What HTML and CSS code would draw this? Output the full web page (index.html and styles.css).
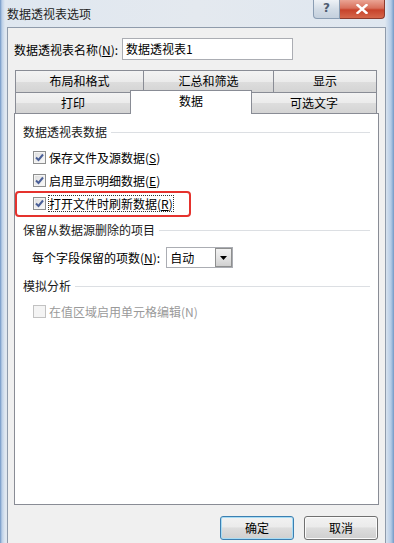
FILE: index.html
```html
<!DOCTYPE html>
<html lang="zh-CN">
<head>
    <meta charset="UTF-8">
    <title>数据透视表选项</title>
    <link rel="stylesheet" href="styles.css">
</head>
<body>
    <div class="frame">
        <div class="titlebar">
            <div class="title">数据透视表选项</div>
            <div class="caption-btns">
                <div class="btn-help">?</div>
                <div class="btn-close">
                    <svg width="12" height="10" viewBox="0 0 12 10">
                        <path d="M1.5 1 L10.5 9 M10.5 1 L1.5 9" stroke="#fff" stroke-width="2.4" stroke-linecap="square"/>
                    </svg>
                </div>
            </div>
        </div>

        <div class="client">
            <div class="name-row">
                <span class="label">数据透视表名称(<u>N</u>):</span>
                <div class="textbox">数据透视表1</div>
            </div>

            <div class="tabs">
                <div class="tab-row row1">
                    <div class="tab w128">布局和格式</div>
                    <div class="tab w130">汇总和筛选</div>
                    <div class="tab w104 last">显示</div>
                </div>
                <div class="tab-row row2">
                    <div class="tab w115">打印</div>
                    <div class="tab w122 active">数据</div>
                    <div class="tab w125 last">可选文字</div>
                </div>
            </div>

            <div class="panel">
                <div class="group">数据透视表数据</div>
                <div class="checks">
                    <div class="check-row">
                        <span class="cb"><svg width="11" height="11" viewBox="0 0 11 11"><path d="M2 5.5 L4.5 8 L9 2.5" fill="none" stroke="#4a5f97" stroke-width="2"/></svg></span>
                        <span>保存文件及源数据(<u>S</u>)</span>
                    </div>
                    <div class="check-row">
                        <span class="cb"><svg width="11" height="11" viewBox="0 0 11 11"><path d="M2 5.5 L4.5 8 L9 2.5" fill="none" stroke="#4a5f97" stroke-width="2"/></svg></span>
                        <span>启用显示明细数据(<u>E</u>)</span>
                    </div>
                    <div class="check-row">
                        <span class="cb"><svg width="11" height="11" viewBox="0 0 11 11"><path d="M2 5.5 L4.5 8 L9 2.5" fill="none" stroke="#4a5f97" stroke-width="2"/></svg></span>
                        <span class="focus">打开文件时刷新数据(<u>R</u>)</span>
                    </div>
                </div>

                <div class="group g2">保留从数据源删除的项目</div>
                <div class="select-row">
                    <span>每个字段保留的项数(<u>N</u>):</span>
                    <div class="combo">
                        <span class="combo-text">自动</span>
                        <span class="combo-btn">
                            <svg width="7" height="4" viewBox="0 0 7 4"><path d="M0 0 H7 L3.5 4 Z" fill="#000"/></svg>
                        </span>
                    </div>
                </div>

                <div class="group g3">模拟分析</div>
                <div class="check-row disabled">
                    <span class="cb"></span>
                    <span>在值区域启用单元格编辑(N)</span>
                </div>

                <div class="mark"></div>
            </div>

            <div class="buttons">
                <div class="button default">确定</div>
                <div class="button">取消</div>
            </div>
        </div>
    </div>
</body>
</html>
```

FILE: styles.css
```css
*{
    box-sizing: border-box;
}
body{
    margin: 0;
    width: 394px;
    height: 543px;
    overflow: hidden;
    font-family: "Noto Sans CJK SC", "Microsoft YaHei", sans-serif;
    font-size: 12px;
    color: #000;
}

/* 外框 */
.frame{
    height: 543px;
    padding: 0 8px 0 7px;
    background: linear-gradient(to right, #6f95c4 0, #bcd0e8 2px, #dfe7f0 5px, #e4e9ef 50%, #dfe7f0 385px, #b4cbe6 391px, #7399c6 394px);
}
.titlebar{
    height: 27px;
    display: flex;
    justify-content: space-between;
    align-items: flex-start;
}
.title{
    line-height: 16px;
    padding-top: 6px;
    color: #1e1e1e;
}
.caption-btns{
    display: flex;
    margin-right: 1px;
}
.btn-help{
    width: 27px;
    height: 19px;
    border: 1px solid #8a9db3;
    border-top: none;
    border-radius: 0 0 0 4px;
    background: linear-gradient(#eef2f6, #d3dce6 50%, #c4d0dd);
    color: #4e5d70;
    font-family: "DejaVu Sans", sans-serif;
    font-weight: bold;
    font-size: 12px;
    line-height: 17px;
    text-align: center;
}
.btn-close{
    width: 45px;
    height: 19px;
    border: 1px solid #8c3a2c;
    border-top: none;
    border-left: none;
    border-radius: 0 0 4px 0;
    background: linear-gradient(#eaa494, #d8705c 45%, #c7432b 55%, #d5674b);
    display: flex;
    align-items: center;
    justify-content: center;
}

/* 客户区 */
.client{
    height: 516px;
    border: 1px solid #8f9bab;
    border-bottom: none;
    background: #f0f0f0;
    padding: 10px 6px 0 6px;
}
.name-row{
    display: flex;
    align-items: center;
    height: 22px;
}
.label{
    width: 108px;
}
.textbox{
    width: 171px;
    height: 22px;
    border: 1px solid #abadb3;
    background: #fff;
    padding-left: 3px;
    line-height: 20px;
}

/* 选项卡 */
.tabs{
    margin-top: 10px;
    margin-left: 1px;
}
.tab-row{
    display: flex;
    align-items: flex-end;
}
.row1{
    height: 22px;
}
.row2{
    height: 21px;
}
.tab{
    height: 100%;
    border: 1px solid #898c95;
    border-right: none;
    border-bottom: none;
    background: linear-gradient(#f3f3f3, #ebebeb 50%, #dddddd 51%, #d4d4d4);
    text-align: center;
    line-height: 20px;
}
.tab.last{
    border-right: 1px solid #898c95;
}
.tab.active{
    height: 24px;
    margin-bottom: -1px;
    background: #fff;
    border-right: 1px solid #898c95;
    position: relative;
    z-index: 1;
}
.tab.active + .tab{
    border-left: none;
}
.w128{ width: 128px; }
.w130{ width: 130px; }
.w104{ width: 104px; }
.w115{ width: 115px; }
.w122{ width: 122px; }
.w125{ width: 125px; }

.panel{
    position: relative;
    width: 365px;
    height: 392px;
    border: 1px solid #898c95;
    background: #fff;
    padding: 10px 8px 0 8px;
}
.group{
    display: flex;
    align-items: center;
    height: 16px;
    line-height: 16px;
    color: #1a1a1a;
}
.group::after{
    content: "";
    flex: 1;
    border-top: 1px solid #dcdfe3;
    margin-left: 4px;
    margin-top: 1px;
}
.g2{
    margin-top: 7px;
}
.g3{
    margin-top: 10px;
}
.checks{
    margin-top: 6px;
}
.check-row{
    display: flex;
    align-items: center;
    height: 23px;
    padding-left: 10px;
}
.cb{
    width: 13px;
    height: 13px;
    margin-right: 3px;
    border: 1px solid #8e8f8f;
    background: linear-gradient(135deg, #dcdcdc, #fbfbfb);
    box-shadow: inset 0 0 0 1px #f4f4f4;
    display: flex;
}
.cb svg{
    display: block;
}
.focus{
    outline: 1px dotted #333;
    line-height: 15px;
}
.check-row.disabled{
    margin-top: 6px;
    color: #9a9a9a;
}
.disabled .cb{
    border-color: #c2c2c2;
    background: #f4f4f4;
    box-shadow: none;
}
.select-row{
    display: flex;
    align-items: center;
    margin-top: 9px;
    padding-left: 9px;
    height: 21px;
}
.combo{
    display: flex;
    width: 67px;
    height: 21px;
    margin-left: 6px;
    border: 1px solid #abadb3;
    background: #fff;
}
.combo-text{
    flex: 1;
    padding-left: 3px;
    line-height: 19px;
}
.combo-btn{
    width: 17px;
    border: 1px solid #8e8f8f;
    background: linear-gradient(#f2f2f2, #e4e4e4 50%, #d0d0d0);
    display: flex;
    align-items: center;
    justify-content: center;
}

/* 红色标注框 */
.mark{
    position: absolute;
    left: 0;
    top: 77px;
    width: 176px;
    height: 26px;
    border: 2px solid #e5322d;
    border-radius: 4px;
}

/* 底部按钮 */
.buttons{
    display: flex;
    justify-content: flex-end;
    gap: 10px;
    width: 364px;
    margin-top: 11px;
}
.button{
    width: 74px;
    height: 24px;
    border: 1px solid #707070;
    border-radius: 3px;
    background: linear-gradient(#f2f2f2, #ebebeb 45%, #dddddd 50%, #cfcfcf);
    box-shadow: inset 0 0 0 1px #fbfbfb;
    text-align: center;
    line-height: 22px;
}
.button.default{
    border-color: #3c7fb1;
    box-shadow: inset 0 0 0 1px #a8dcf4;
}
```
